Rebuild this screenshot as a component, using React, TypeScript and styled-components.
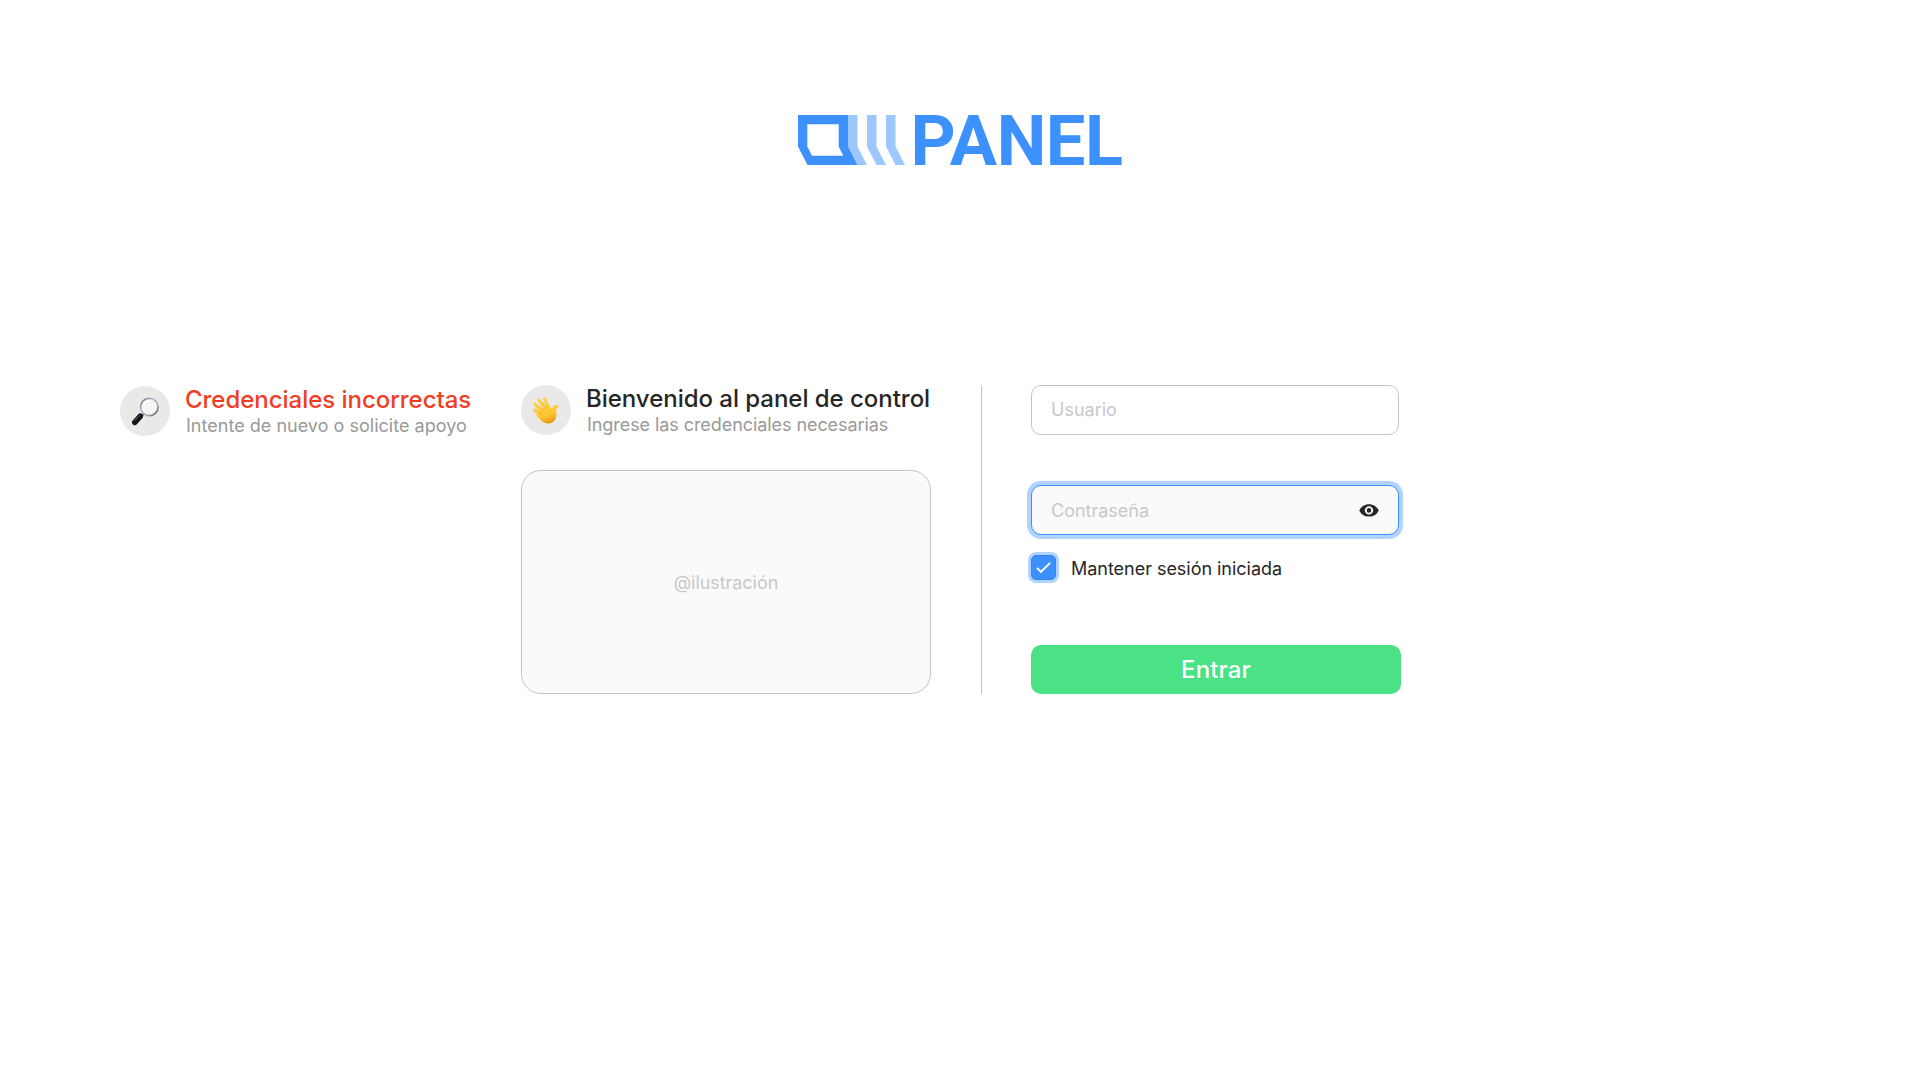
import React, { useState } from 'react';
import styled, { createGlobalStyle, css } from 'styled-components';

const GlobalStyle = createGlobalStyle`
  *, *::before, *::after { box-sizing: border-box; }
  body {
    margin: 0;
    background: #fff;
    color: #262626;
    font-family: Inter, 'Liberation Sans', sans-serif;
  }
`;

const Page = styled.div`
  width: 1920px;
  height: 1080px;
  overflow: hidden;
  display: flex;
  flex-direction: column;
`;

const Header = styled.header`
  display: flex;
  padding: 115px 0 0 798px;
  height: 385px;
`;

const LogoArt = styled.svg`
  width: 326px;
  height: 50px;
  overflow: visible;
  font-family: Roboto, sans-serif;
  font-size: 70.3px;
  font-weight: 700;
  letter-spacing: -0.4px;
`;

const Content = styled.main`
  display: flex;
  align-items: flex-start;
  height: 309px;
  padding-left: 120px;
`;

const AlertColumn = styled.section`
  width: 401px;
  padding-top: 1px;
`;

const WelcomeColumn = styled.section`
  width: 410px;
`;

const Notice = styled.div`
  display: flex;
  gap: 15px;
  height: 50px;
`;

const Avatar = styled.div`
  flex: none;
  display: grid;
  place-items: center;
  width: 50px;
  height: 50px;
  border-radius: 50%;
  background: #e9e9e9;
`;

const NoticeText = styled.div`
  white-space: nowrap;
`;

const Title = styled.h2<{ $error?: boolean }>`
  margin: 0;
  font-size: 24px;
  line-height: 27px;
  font-weight: 500;
  letter-spacing: -0.03px;
  color: ${(p) => (p.$error ? '#f03d24' : '#262626')};
`;

const Subtitle = styled.p<{ $spacing: number }>`
  margin: 0;
  padding-left: 1px;
  font-size: 18px;
  line-height: 25px;
  font-weight: 400;
  letter-spacing: ${(p) => p.$spacing}px;
  color: #999;
`;

const Illustration = styled.div`
  display: grid;
  place-items: center;
  height: 224px;
  margin-top: 35px;
  border: 1px solid #c4c4c4;
  border-radius: 20px;
  background: #fafafa;
  color: #c8c8c8;
  font-size: 18px;
  letter-spacing: -0.05px;
`;

const Divider = styled.div`
  width: 1px;
  height: 309px;
  margin: 0 49px 0 50px;
  background: #c4c4c4;
`;

const Form = styled.form`
  display: flex;
  flex-direction: column;
  width: 370px;
`;

const Field = styled.div<{ $focused?: boolean }>`
  display: flex;
  align-items: center;
  width: 368px;
  height: 50px;
  padding: 0 19px 1px;
  border: 1px solid #c4c4c4;
  border-radius: 10px;
  ${(p) =>
    p.$focused &&
    css`
      margin-top: 50px;
      padding-bottom: 0;
      border-color: #3c91ff;
      background: #fafafa;
      box-shadow: 0 0 0 4px #b1d3ff;
    `}
`;

const Input = styled.input`
  flex: 1;
  min-width: 0;
  padding: 0;
  border: 0;
  outline: 0;
  background: transparent;
  color: #262626;
  font: 400 18px Inter, sans-serif;
  &::placeholder { color: #c8c8c8; opacity: 1; }
`;

const EyeButton = styled.button`
  display: flex;
  padding: 0;
  border: 0;
  background: none;
`;

const Remember = styled.label`
  display: flex;
  align-items: center;
  gap: 15px;
  height: 25px;
  margin-top: 20px;
  font-size: 18px;
  line-height: 23px;
`;

const RememberText = styled.span`
  padding-top: 2px;
  letter-spacing: -0.03px;
`;

const Check = styled.span`
  display: grid;
  place-items: center;
  width: 25px;
  height: 25px;
  border: 1px solid #3785ea;
  border-radius: 5px;
  background: #3c91ff;
  box-shadow: 0 0 0 3px #b1d3ff;
`;

const Submit = styled.button`
  height: 49px;
  margin-top: 65px;
  padding: 0;
  border: 0;
  border-radius: 10px;
  background: #4be185;
  color: #fff;
  font: 500 24px Inter, sans-serif;
  letter-spacing: 0.1px;
`;

const Logo = () => (
  <LogoArt viewBox="0 0 326 50">
    <g fill="#9dc7ff">
      <path d="M50 0h9.5v31.5L69 50h-9.5L50 31.5z" />
      <path d="M69 0h9.5v31.5L88 50h-9.5L69 31.5z" />
      <path d="M88 0h9.5v31.5L107 50h-9.5L88 31.5z" />
    </g>
    <path
      fill="#3c91ff"
      fillRule="evenodd"
      d="M0 0h50v31.5L59.5 50h-50L0 31.5zM9.3 9.3v22.2L14 40.7h31.2l-4.5-9.2V9.3z"
    />
    <text x="112.6" y="50" fill="#3c91ff">PANEL</text>
  </LogoArt>
);

const Magnifier = () => (
  <svg width="30" height="30" viewBox="0 0 30 30">
    <defs>
      <linearGradient id="rim" x1="0" y1="0" x2="1" y2="1">
        <stop offset="0" stopColor="#6d6d70" />
        <stop offset=".35" stopColor="#a9bccd" />
        <stop offset=".65" stopColor="#b0b0b3" />
        <stop offset="1" stopColor="#55565a" />
      </linearGradient>
    </defs>
    <path d="M14 17.4l-3 3" stroke="#717377" strokeWidth="2.6" />
    <path d="M10.2 20.3l-5.4 6" stroke="#131517" strokeWidth="5.6" strokeLinecap="round" />
    <path d="M9.4 19.4l-5 5.6" stroke="#5b5f64" strokeWidth="1" strokeLinecap="round" />
    <circle cx="19.3" cy="11" r="8.7" fill="#f5f5f7" stroke="url(#rim)" strokeWidth="1.8" />
    <path d="M13 9.4c1.2-3.4 4.4-4.9 7.8-4.1" fill="none" stroke="#fff" strokeWidth="1.5" />
  </svg>
);

const WavingHand = () => (
  <svg width="30" height="30" viewBox="0 0 30 30">
    <defs>
      <linearGradient id="skin" gradientUnits="userSpaceOnUse" x1="10" y1="3" x2="19" y2="28">
        <stop offset="0" stopColor="#ffd34b" />
        <stop offset=".7" stopColor="#ffc634" />
        <stop offset="1" stopColor="#e39410" />
      </linearGradient>
    </defs>
    <g stroke="url(#skin)" strokeWidth="3.2" strokeLinecap="round">
      <path d="M13.7 3.8l4.6 10.4" />
      <path d="M7.9 4.9l7.2 11" />
      <path d="M4.1 9.1l8.2 9.6" />
      <path d="M3.7 15l7.5 8" />
    </g>
    <path
      d="M11.2 12.2l7.7-1.8 1.3 3.1c.6.6 1.1.3 1.5-.7.8-2.1 2-3 3.7-2.7 1.7.3 2.4 1.1 2.1 1.8-.3.7-1.7.8-2.1 2.3-.6 2.1.5 4.4-.1 7.3-.7 3.5-3.3 6.6-7.4 7-3.4.3-6.1-1.1-8.4-3.5l-4.3-4.6z"
      fill="url(#skin)"
    />
    <g fill="none" stroke="#e89f18" strokeWidth=".7" strokeLinecap="round">
      <path d="M12 7.5l4 6.3M7.8 10.6l5 5.9M6.6 15.2l4.5 4.9" />
      <path d="M20.3 14.5c-2.2 1-3 3.3-2.3 5.3" strokeWidth=".4" />
    </g>
  </svg>
);

const Eye = () => (
  <svg width="20" height="13" viewBox="0 0 20 13">
    <path
      fill="#262626"
      fillRule="evenodd"
      d="M10 .2C5.6.2 1.9 2.6.3 6.4c1.6 3.8 5.3 6.2 9.7 6.2s8.1-2.4 9.7-6.2C18.1 2.6 14.4.2 10 .2zm0 10.4a4.2 4.2 0 1 1 0-8.4 4.2 4.2 0 0 1 0 8.4zm0-6.5a2.3 2.3 0 1 0 0 4.6 2.3 2.3 0 0 0 0-4.6z"
    />
  </svg>
);

export default function App() {
  const [user, setUser] = useState('');
  const [password, setPassword] = useState('');
  return (
    <Page>
      <GlobalStyle />
      <Header>
        <Logo />
      </Header>
      <Content>
        <AlertColumn>
          <Notice>
            <Avatar><Magnifier /></Avatar>
            <NoticeText>
              <Title $error>Credenciales incorrectas</Title>
              <Subtitle $spacing={0.02}>Intente de nuevo o solicite apoyo</Subtitle>
            </NoticeText>
          </Notice>
        </AlertColumn>
        <WelcomeColumn>
          <Notice>
            <Avatar><WavingHand /></Avatar>
            <NoticeText>
              <Title>Bienvenido al panel de control</Title>
              <Subtitle $spacing={-0.07}>Ingrese las credenciales necesarias</Subtitle>
            </NoticeText>
          </Notice>
          <Illustration>@ilustración</Illustration>
        </WelcomeColumn>
        <Divider />
        <Form onSubmit={(e) => e.preventDefault()}>
          <Field>
            <Input placeholder="Usuario" value={user} onChange={(e) => setUser(e.target.value)} />
          </Field>
          <Field $focused>
            <Input placeholder="Contraseña" type="password" value={password} onChange={(e) => setPassword(e.target.value)} />
            <EyeButton type="button"><Eye /></EyeButton>
          </Field>
          <Remember>
            <Check>
              <svg width="15" height="11" viewBox="0 0 15 11">
                <path d="M1 5.8l4 4L14 1" fill="none" stroke="#fff" strokeWidth="1.9" />
              </svg>
            </Check>
            <RememberText>Mantener sesión iniciada</RememberText>
          </Remember>
          <Submit>Entrar</Submit>
        </Form>
      </Content>
    </Page>
  );
}
